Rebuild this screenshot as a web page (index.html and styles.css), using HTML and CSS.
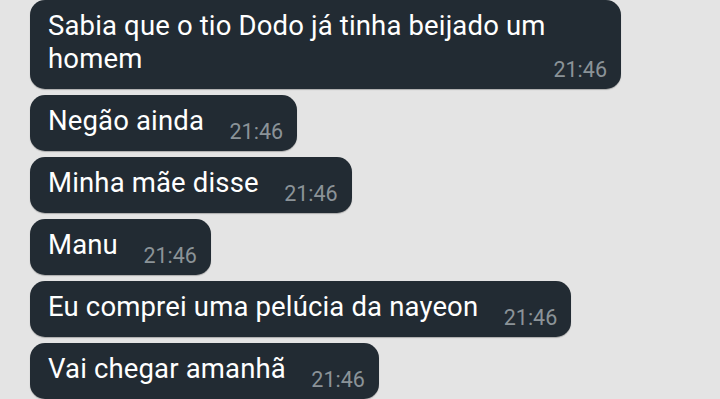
FILE: index.html
```html
<!DOCTYPE html>
<html lang="pt">
<head>
<meta charset="utf-8">
<link rel="stylesheet" href="styles.css">
</head>
<body>
<div class="chat">
  <div class="bubble bubble-wide"><span class="text">Sabia que o tio Dodo já tinha beijado um homem</span><span class="spacer"></span><span class="time">21:46</span></div>
  <div class="bubble"><span class="text">Negão ainda</span><span class="spacer"></span><span class="time">21:46</span></div>
  <div class="bubble"><span class="text">Minha mãe disse</span><span class="spacer"></span><span class="time">21:46</span></div>
  <div class="bubble"><span class="text">Manu</span><span class="spacer"></span><span class="time">21:46</span></div>
  <div class="bubble"><span class="text">Eu comprei uma pelúcia da nayeon</span><span class="spacer"></span><span class="time">21:46</span></div>
  <div class="bubble"><span class="text">Vai chegar amanhã</span><span class="spacer"></span><span class="time">21:46</span></div>
</div>
</body>
</html>
```

FILE: styles.css
```css
html, body {
  margin: 0;
  padding: 0;
  background: #e4e4e4;
  height: 100%;
  overflow: hidden;
}
.chat {
  display: flex;
  flex-direction: column;
  align-items: flex-start;
  gap: 6px;
  padding: 0 0 0 30px;
  font-family: Roboto, "Noto Sans", sans-serif;
}
.bubble {
  position: relative;
  box-sizing: border-box;
  max-width: 591px;
  padding: 9px 14px 14px 18px;
  background: #222b33;
  border-radius: 15px;
  color: #ffffff;
  font-size: 27.5px;
  line-height: 33px;
  letter-spacing: 0.15px;
  box-shadow: 0 1px 1px rgba(0, 0, 0, 0.25);
}
.spacer {
  display: inline-block;
  width: 79px;
}
.time {
  position: absolute;
  right: 14px;
  bottom: 7px;
  font-size: 21.5px;
  line-height: 24px;
  letter-spacing: 0;
  color: #8b9398;
}
```
